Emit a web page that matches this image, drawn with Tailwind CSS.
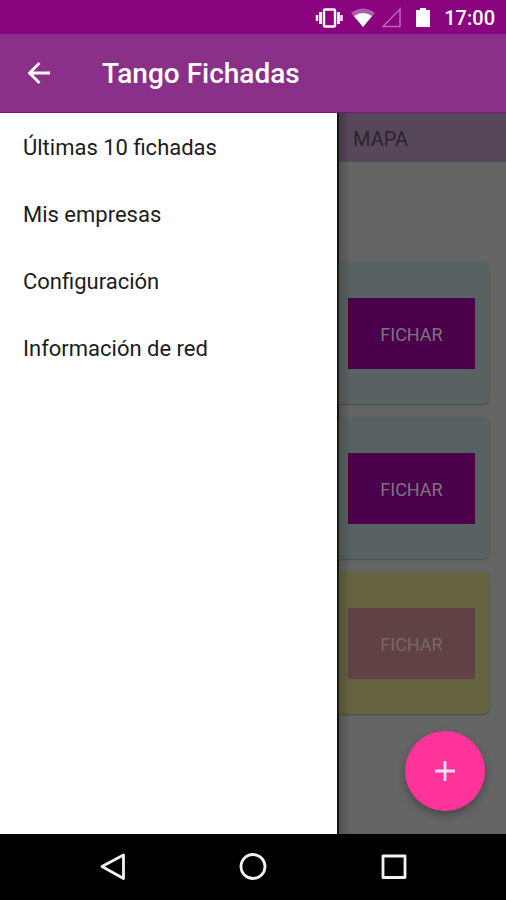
<!DOCTYPE html>
<html lang="es">
<head>
<meta charset="utf-8">
<meta name="viewport" content="width=device-width, initial-scale=1">
<title>Tango Fichadas</title>
<script src="https://cdn.jsdelivr.net/npm/@tailwindcss/browser@4"></script>
</head>
<body class="flex min-h-screen flex-col bg-[#656565] font-['Roboto',sans-serif]">
  <div class="flex h-[34px] shrink-0 items-center justify-end bg-[#8a0480] pt-px pr-[11px] text-white">
    <svg class="mr-2 h-6 w-7" viewBox="0 0 28 24" fill="none" stroke="currentColor" aria-hidden="true">
      <rect x="9" y="3.500" width="11" height="17" rx="1" stroke-width="2.400"/>
      <path d="M5.500 6v12M23.500 6v12" stroke-width="2.800"/>
      <path d="M2 9v6M26.500 9v6" stroke-width="2.400"/>
    </svg>
    <svg class="mr-1 h-6 w-6" viewBox="0 0 24 24" fill="currentColor" aria-hidden="true">
      <path d="M0 7Q12-2 24 7L12 21z" opacity=".35"/>
      <path d="M3 10Q12 4 21 10L12 21z"/>
    </svg>
    <svg class="mr-3 h-6 w-6" viewBox="0 0 24 24" fill="none" stroke="currentColor" stroke-width="1.500" opacity=".4" aria-hidden="true">
      <path d="M4 20.500L21 3V20.500z"/>
    </svg>
    <svg class="mr-[13px] h-6 w-4" viewBox="0 0 16 24" fill="currentColor" aria-hidden="true">
      <path d="M5 2h6v2h4v17H1V4h4z"/>
    </svg>
    <span class="text-xl leading-6 font-medium">17:00</span>
  </div>

  <header class="flex h-[79px] shrink-0 items-center border-b border-[#75196f] bg-[#8b3088] pl-6 text-white">
    <button type="button" aria-label="Volver" class="mr-12 flex h-8 w-[30px] items-center justify-center">
      <svg class="h-6 w-6" viewBox="0 0 24 24" fill="none" stroke="currentColor" stroke-width="2.800" aria-hidden="true">
        <path d="M23 12H2.500M12.500 2L2.500 12L12.500 22"/>
      </svg>
    </button>
    <h1 class="pt-[2px] text-[28px] leading-8 font-medium">Tango Fichadas</h1>
  </header>

  <main class="flex flex-1">
    <nav aria-label="Menú" class="w-[67%] border-r-2 border-[#111313] bg-white pt-px text-[22px] leading-[27px] text-[#1c1c1c]">
      <a href="#" class="block px-[23px] py-5">Últimas 10 fichadas</a>
      <a href="#" class="block px-[23px] py-5">Mis empresas</a>
      <a href="#" class="block px-[23px] py-5">Configuración</a>
      <a href="#" class="block px-[23px] py-5">Información de red</a>
    </nav>

    <section class="relative flex-1">
      <div class="flex h-[49px] items-center bg-[#57475a] pt-[2px] pl-[14px]">
        <a href="#" class="text-xl text-[#2b232d]">MAPA</a>
      </div>
      <div class="mt-[100px] flex flex-col gap-[13px] pr-[17px]">
        <article class="rounded-r-md bg-[#596262] pt-9 pr-[14px] pb-[35px] pl-[9px] shadow-[0_1px_2px_#454949]">
          <button type="button" class="h-[71px] w-full bg-[#4a004a] pt-[2px] text-lg text-[#80737f]">FICHAR</button>
        </article>
        <article class="rounded-r-md bg-[#596262] pt-9 pr-[14px] pb-[35px] pl-[9px] shadow-[0_1px_2px_#454949]">
          <button type="button" class="h-[71px] w-full bg-[#4a004a] pt-[2px] text-lg text-[#80737f]">FICHAR</button>
        </article>
        <article class="rounded-r-md bg-[#666340] pt-9 pr-[14px] pb-[35px] pl-[9px] shadow-[0_1px_2px_#4d4b40]">
          <button type="button" disabled class="h-[71px] w-full bg-[#604244] pt-[2px] text-lg text-[#77686a]">FICHAR</button>
        </article>
      </div>
      <div class="pointer-events-none absolute inset-y-0 left-0 w-3 bg-linear-to-r from-black/20 to-transparent"></div>
      <button type="button" aria-label="Agregar" class="absolute right-[21px] bottom-[23px] flex size-20 items-center justify-center rounded-full bg-[#ff3399] text-[#ffe3f1] shadow-[0_4px_8px_#0000004d]">
        <svg class="size-6" viewBox="0 0 24 24" fill="none" stroke="currentColor" stroke-width="2.800" aria-hidden="true">
          <path d="M12 2v20M2 12h20"/>
        </svg>
      </button>
    </section>
  </main>

  <footer class="flex h-[66px] shrink-0 items-center justify-center gap-28 bg-black text-[#f2f2f2]">
    <button type="button" aria-label="Atrás">
      <svg class="size-7" viewBox="0 0 28 28" fill="none" stroke="currentColor" stroke-width="2.800" stroke-linejoin="round" aria-hidden="true">
        <path d="M24.500 2V25.500L3 13.500z"/>
      </svg>
    </button>
    <button type="button" aria-label="Inicio">
      <svg class="size-7" viewBox="0 0 28 28" fill="none" stroke="currentColor" stroke-width="2.800" aria-hidden="true">
        <circle cx="14" cy="13.500" r="12"/>
      </svg>
    </button>
    <button type="button" aria-label="Recientes">
      <svg class="size-7" viewBox="0 0 28 28" fill="none" stroke="currentColor" stroke-width="2.800" stroke-linejoin="round" aria-hidden="true">
        <rect x="4" y="3" width="22" height="21.500"/>
      </svg>
    </button>
  </footer>
</body>
</html>
